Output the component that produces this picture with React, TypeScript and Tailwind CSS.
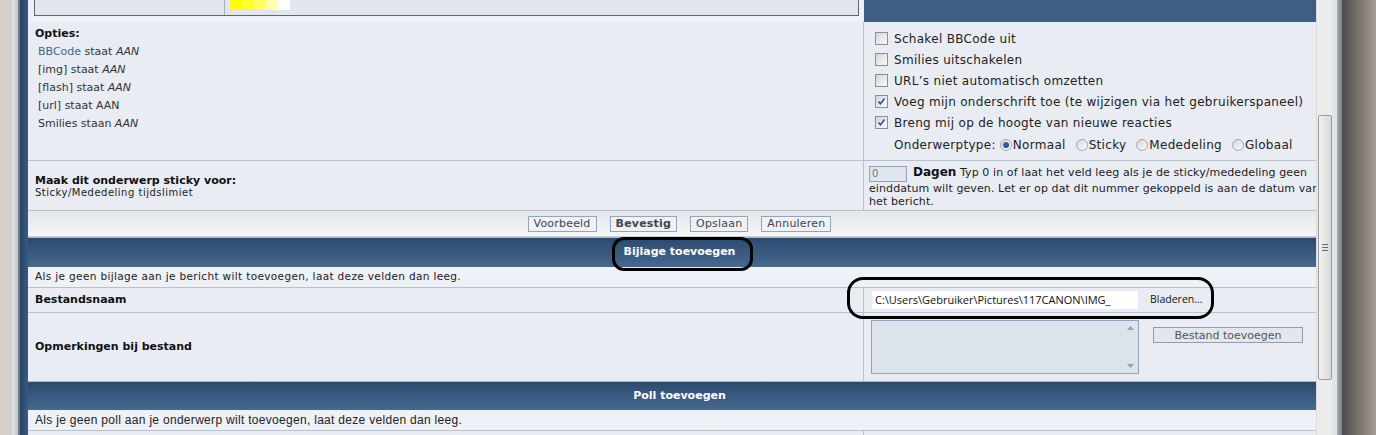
import React from 'react';

const Checkbox: React.FC<{ checked?: boolean }> = ({ checked }) => (
    <span className="inline-flex w-[13px] h-[13px] shrink-0 items-center justify-center border border-[#8e8f8f] bg-gradient-to-br from-[#d2d5da] to-[#fafafa]">
        {checked && (
            <svg width="9" height="9" viewBox="0 0 9 9">
                <path d="M1.5 4.5 L3.5 6.8 L7.5 1.5" fill="none" stroke="#3b4f8a" strokeWidth="1.6" />
            </svg>
        )}
    </span>
);

const Radio: React.FC<{ checked?: boolean }> = ({ checked }) => (
    <span className="inline-flex w-[12px] h-[12px] shrink-0 items-center justify-center rounded-full border border-[#a6a9ad] bg-gradient-to-br from-[#d5d8dc] to-[#fbfbfb]">
        {checked && <span className="w-[6px] h-[6px] rounded-full bg-gradient-to-br from-[#4a7bc4] to-[#163e7e]" />}
    </span>
);

const FormButton: React.FC<{ label: string; bold?: boolean }> = ({ label, bold }) => (
    <span
        className={`h-[16px] px-[5px] flex items-center border border-[#8fa6bf] bg-[#eef2f7] text-[11px] tracking-[0.2px] text-[#444] leading-none ${bold ? 'font-bold' : ''}`}
    >
        {label}
    </span>
);

const SectionHeader: React.FC<{ title: string; h: string }> = ({ title, h }) => (
    <div className={`${h} flex items-center justify-center border-t border-[#a9b9cc] bg-gradient-to-b from-[#2b4a6f] to-[#47698f] text-white text-[11px] font-bold`}>
        {title}
    </div>
);

const App: React.FC = () => {
    const swatches = ['#ffff00', '#ffff2a', '#ffff66', '#ffffb0', '#ffffff'];

    return (
        <div className="relative w-[1376px] h-[435px] overflow-hidden flex bg-[#d4cfc7] text-[#222]" style={{ fontFamily: '"DejaVu Sans", Verdana, sans-serif' }}>
            {/* window frame left */}
            <div className="w-[12px] bg-[#d4cfc7]" />
            <div className="w-[6px] bg-gradient-to-r from-[#e6e8ea] to-[#c0c5cb]" />
            <div className="w-[2px] bg-[#6f7780]" />
            <div className="w-[8px] bg-gradient-to-r from-[#254468] to-[#3a5b82]" />

            {/* page */}
            <div className="w-[1288px] overflow-hidden bg-[#e9edf3]">
                <div className="w-[1303px] flex flex-col">
                    {/* row 0: tail of the previous block */}
                    <div className="grid grid-cols-[835px_1fr] h-[22px]">
                        <div className="bg-[#eef1f5] pl-[6px]">
                            <div className="w-[825px] h-[16px] flex border-x border-b border-[#5d6672] bg-[#e3e7ed]">
                                <div className="w-[190px] border-r border-[#a3afbd]" />
                                <div className="flex pl-[5px] h-[10px]">
                                    {swatches.map((c) => (
                                        <span key={c} className="w-[12px] h-[10px]" style={{ backgroundColor: c }} />
                                    ))}
                                </div>
                            </div>
                        </div>
                        <div className="ml-[1px] bg-[#3e5e84]" />
                    </div>

                    {/* row 1: options */}
                    <div className="grid grid-cols-[835px_1fr] h-[139px] border-b border-[#b6c2d1]">
                        <div className="pt-[3px] pl-[7px]">
                            <div className="text-[11px] font-bold leading-[18px] text-[#111]">Opties:</div>
                            <div className="pl-[3px] text-[11px] leading-[18px] text-[#333]">
                                <div><span className="text-[#4a6588]">BBCode</span> staat <i>AAN</i></div>
                                <div>[img] staat <i>AAN</i></div>
                                <div>[flash] staat <i>AAN</i></div>
                                <div>[url] staat AAN</div>
                                <div>Smilies staan <i>AAN</i></div>
                            </div>
                        </div>
                        <div className="border-l border-[#b6c2d1] pt-[6px] pl-[11px] text-[12px] tracking-[0.3px] text-[#222]">
                            {[
                                ['Schakel BBCode uit', false],
                                ['Smilies uitschakelen', false],
                                ["URL\u2019s niet automatisch omzetten", false],
                                ['Voeg mijn onderschrift toe (te wijzigen via het gebruikerspaneel)', true],
                                ['Breng mij op de hoogte van nieuwe reacties', true],
                            ].map(([label, checked]) => (
                                <div key={label as string} className="h-[21px] flex items-center gap-[6px]">
                                    <Checkbox checked={checked as boolean} />
                                    <span>{label}</span>
                                </div>
                            ))}
                            <div className="h-[24px] flex items-center pl-[19px]">
                                <span className="mr-[4px]">Onderwerptype:</span>
                                <Radio checked />
                                <span className="ml-[1px] mr-[10px]">Normaal</span>
                                <Radio />
                                <span className="ml-[1px] mr-[10px]">Sticky</span>
                                <Radio />
                                <span className="ml-[1px] mr-[10px]">Mededeling</span>
                                <Radio />
                                <span className="ml-[1px]">Globaal</span>
                            </div>
                        </div>
                    </div>

                    {/* row 2: sticky */}
                    <div className="grid grid-cols-[835px_1fr] h-[50px] border-b border-[#b6c2d1]">
                        <div className="pl-[7px] pt-[13px]">
                            <div className="text-[11px] font-bold leading-[13px] text-[#111]">Maak dit onderwerp sticky voor:</div>
                            <div className="text-[10px] tracking-[0.5px] leading-[12px]">Sticky/Mededeling tijdslimiet</div>
                        </div>
                        <div className="border-l border-[#b6c2d1] pl-[5px] pt-[5px] pr-[2px] text-[11px] tracking-[0.1px] leading-[13px]">
                            <span className="inline-block align-top w-[38px] h-[16px] border border-[#8fa3ba] bg-[#dfe5ed] text-[10px] tracking-normal text-[#777] pl-[2px] leading-[14px] mr-[6px]">0</span>
                            <b className="text-[12px] tracking-normal text-[#111]">Dagen</b> Typ 0 in of laat het veld leeg als je de sticky/mededeling geen einddatum wilt geven. Let er op dat dit nummer gekoppeld is aan de datum van het bericht.
                        </div>
                    </div>

                    {/* row 3: buttons */}
                    <div className="h-[26px] flex items-center justify-center gap-[13px] bg-gradient-to-b from-[#e4e6e9] to-[#f5f6f7] border-b border-[#c8cfd8]">
                        <FormButton label="Voorbeeld" />
                        <FormButton label="Bevestig" bold />
                        <FormButton label="Opslaan" />
                        <FormButton label="Annuleren" />
                    </div>

                    <SectionHeader title="Bijlage toevoegen" h="h-[30px]" />

                    <div className="h-[21px] flex items-center pl-[7px] text-[10.5px] tracking-[0.35px] border-b border-[#b6c2d1] bg-[#eef1f5]">
                        Als je geen bijlage aan je bericht wilt toevoegen, laat deze velden dan leeg.
                    </div>

                    <div className="grid grid-cols-[835px_1fr] h-[25px] border-b border-[#b6c2d1]">
                        <div className="pl-[7px] flex items-center text-[11px] font-bold text-[#111]">Bestandsnaam</div>
                        <div className="border-l border-[#b6c2d1] flex items-center pl-[8px]" style={{ fontFamily: '"Open Sans", "Noto Sans", sans-serif' }}>
                            <span className="w-[266px] h-[18px] bg-white flex items-center pl-[3px] text-[11px] text-[#111] overflow-hidden whitespace-nowrap">C:\Users\Gebruiker\Pictures\117CANON\IMG_</span>
                            <span className="ml-[12px] text-[10.5px] text-[#111]">Bladeren...</span>
                        </div>
                    </div>

                    <div className="grid grid-cols-[835px_1fr] h-[68px]">
                        <div className="pl-[7px] flex items-center text-[11px] font-bold text-[#111]">Opmerkingen bij bestand</div>
                        <div className="border-l border-[#b6c2d1] flex items-start pl-[7px] pt-[7px]">
                            <div className="w-[268px] h-[54px] border border-[#8fa3ba] bg-[#dde3eb] flex justify-end">
                                <div className="w-[16px] flex flex-col items-center justify-between py-[5px]">
                                    <svg width="7" height="4" viewBox="0 0 7 4"><path d="M0 4 L3.5 0 L7 4 Z" fill="#9aa3ad" /></svg>
                                    <svg width="7" height="4" viewBox="0 0 7 4"><path d="M0 0 L3.5 4 L7 0 Z" fill="#9aa3ad" /></svg>
                                </div>
                            </div>
                            <span className="ml-[14px] mt-[7px] w-[150px] h-[16px] border border-[#8e9eb0] bg-[#e2e7ee] flex items-center justify-center text-[11px] text-[#555] leading-none">
                                Bestand toevoegen
                            </span>
                        </div>
                    </div>

                    <SectionHeader title="Poll toevoegen" h="h-[29px]" />

                    <div className="h-[21px] flex items-center pl-[7px] text-[12px] tracking-[0.3px] border-b border-[#b6c2d1] bg-[#eef1f5]" style={{ fontFamily: '"Liberation Sans", Tahoma, sans-serif' }}>
                        Als je geen poll aan je onderwerp wilt toevoegen, laat deze velden dan leeg.
                    </div>
                    <div className="grid grid-cols-[835px_1fr] h-[20px]">
                        <div />
                        <div className="border-l border-[#b6c2d1]" />
                    </div>
                </div>
            </div>

            {/* scrollbar */}
            <div className="w-[16px] bg-[#ececec] border-l border-[#dcdcdc] flex flex-col items-center">
                <div className="mt-[115px] w-[14px] h-[265px] rounded-[2px] border border-[#9c9c9c] bg-gradient-to-r from-[#f2f2f2] to-[#d9d9d9] flex flex-col items-center justify-center gap-[2px]">
                    <span className="w-[6px] h-[1px] bg-[#6a6a6a]" />
                    <span className="w-[6px] h-[1px] bg-[#6a6a6a]" />
                    <span className="w-[6px] h-[1px] bg-[#6a6a6a]" />
                </div>
            </div>

            {/* window frame right */}
            <div className="w-[5px] bg-[#e2e4e6]" />
            <div className="w-[5px] bg-gradient-to-r from-[#a7acb1] to-[#7c8187]" />
            <div className="w-[3px] bg-[#4c5056]" />
            <div className="flex-1 bg-gradient-to-r from-[#55524e] via-[#7d7871] to-[#a39d95]" />

            {/* hand drawn annotations */}
            <div className="absolute left-[612px] top-[237px] w-[141px] h-[34px] border-[3px] border-black rounded-[12px]" />
            <div className="absolute left-[847px] top-[277px] w-[367px] h-[42px] border-[3px] border-black rounded-[16px]" />
        </div>
    );
};

export default App;
